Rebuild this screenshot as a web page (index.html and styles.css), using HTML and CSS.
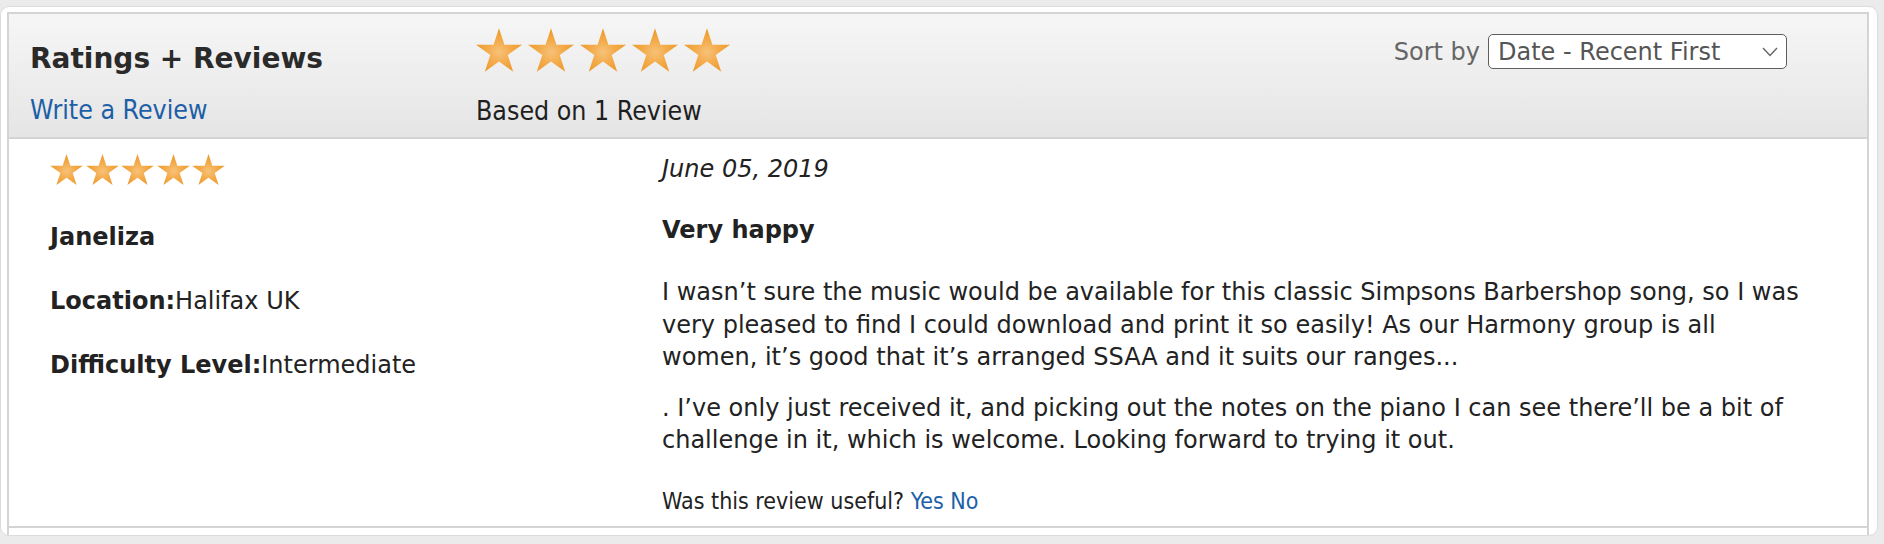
FILE: index.html
```html
<!DOCTYPE html>
<html lang="en">

<head>
  <meta charset="UTF-8">
  <meta name="viewport" content="width=device-width, initial-scale=1.0">
  <title>Ratings + Reviews</title>
  <link rel="stylesheet" href="styles.css">
</head>

<body>
  <svg class="svg-defs" width="0" height="0" aria-hidden="true">
    <defs>
      <radialGradient id="star-fill" cx="50%" cy="55%" r="55%">
        <stop offset="0%" stop-color="#f7c27a" />
        <stop offset="50%" stop-color="#f3aa48" />
        <stop offset="100%" stop-color="#ec982a" />
      </radialGradient>
      <symbol id="star" viewBox="0 0 100 95">
        <polygon points="50,0 61.8,36 100,36 69,58.5 80.9,95 50,72.5 19.1,95 31,58.5 0,36 38.2,36" fill="url(#star-fill)" />
      </symbol>
    </defs>
  </svg>

  <div class="panel">
    <div class="reviews">
      <div class="reviews-header">
        <div class="header-title">
          <h2>Ratings + Reviews</h2>
          <a href="#" class="link">Write a Review</a>
        </div>
        <div class="header-summary">
          <div class="stars stars-large">
            <svg><use href="#star" /></svg>
            <svg><use href="#star" /></svg>
            <svg><use href="#star" /></svg>
            <svg><use href="#star" /></svg>
            <svg><use href="#star" /></svg>
          </div>
          <div class="based-on">Based on 1 Review</div>
        </div>
        <div class="header-sort">
          <span class="sort-label">Sort by</span>
          <div class="sort-select">
            <span>Date - Recent First</span>
            <svg width="16" height="10" viewBox="0 0 16 10">
              <polyline points="1,1 8,8.5 15,1" fill="none" stroke="#666" stroke-width="1.4" />
            </svg>
          </div>
        </div>
      </div>

      <div class="review">
        <div class="review-author">
          <div class="stars stars-small">
            <svg><use href="#star" /></svg>
            <svg><use href="#star" /></svg>
            <svg><use href="#star" /></svg>
            <svg><use href="#star" /></svg>
            <svg><use href="#star" /></svg>
          </div>
          <div class="author-name">Janeliza</div>
          <div class="author-meta"><b>Location:</b>Halifax UK</div>
          <div class="author-meta"><b>Difficulty Level:</b>Intermediate</div>
        </div>
        <div class="review-body">
          <div class="review-date">June 05, 2019</div>
          <h3 class="review-title">Very happy</h3>
          <p>I wasn’t sure the music would be available for this classic Simpsons Barbershop song, so I was very pleased to find I could download and print it so easily! As our Harmony group is all<br>women, it’s good that it’s arranged SSAA and it suits our ranges...</p>
          <p>. I’ve only just received it, and picking out the notes on the piano I can see there’ll be a bit of challenge in it, which is welcome. Looking forward to trying it out.</p>
          <div class="review-useful">Was this review useful? <a href="#" class="link">Yes</a> <a href="#" class="link">No</a></div>
        </div>
      </div>
    </div>
  </div>
</body>

</html>
```

FILE: styles.css
```css
body {
  margin: 0;
  background-color: #ebebeb;
  color: #222;
  font-family: "DejaVu Sans", Verdana, sans-serif;
  font-size: 24px;
}

.svg-defs {
  position: absolute;
  width: 0;
  height: 0;
}

.link {
  color: #1d5fa6;
  text-decoration: none;
}

/* outer white card */
.panel {
  box-sizing: border-box;
  height: 530px;
  margin: 6px 6px 0 0;
  padding: 5px 8px 0 6px;
  background-color: #fff;
  border: 1px solid #dcdcdc;
  border-radius: 9px;
}

.reviews {
  box-sizing: border-box;
  height: 100%;
  border: 2px solid #d4d4d4;
  border-bottom: 0;
}

/* header bar */
.reviews-header {
  box-sizing: border-box;
  height: 125px;
  display: flex;
  background: linear-gradient(#f6f6f6, #e5e5e5);
  border-bottom: 2px solid #d4d4d4;
}

.header-title {
  width: 446px;
  padding: 27px 0 0 21px;
}

.header-title h2 {
  margin: 0;
  font-size: 28px;
  line-height: 36px;
  color: #2a2a2a;
}

.header-title .link,
.based-on {
  display: block;
  margin-top: 16px;
  font-family: "DejaVu Sans Condensed", "DejaVu Sans", sans-serif;
  font-stretch: condensed;
  font-size: 26.5px;
  line-height: 34px;
}

.header-summary {
  flex: 1;
  padding-top: 14px;
}

.based-on {
  margin-top: 22px;
  color: #1f1f1f;
}

.stars {
  display: flex;
}

.stars-large {
  gap: 6px;
}

.stars-large svg {
  width: 46px;
  height: 44px;
}

.stars-small {
  gap: 2.6px;
}

.stars-small svg {
  width: 33px;
  height: 31px;
}

.header-sort {
  display: flex;
  align-items: center;
  gap: 8px;
  align-self: flex-start;
  margin: 20px 80px 0 0;
  color: #666;
}

.sort-select {
  box-sizing: border-box;
  width: 299px;
  height: 35px;
  display: flex;
  align-items: center;
  justify-content: space-between;
  padding: 0 8px 0 9px;
  background-color: #fff;
  border: 1.5px solid #5e5e5e;
  border-radius: 5px;
  color: #555;
}

/* review row */
.review {
  display: flex;
  border-bottom: 2px solid #d4d4d4;
}

.review-author {
  width: 612px;
  padding: 15px 0 0 41px;
}

.author-name,
.author-meta {
  line-height: 32px;
  margin-top: 32px;
}

.author-name {
  margin-top: 36px;
  font-weight: bold;
}

.review-body {
  flex: 1;
  padding: 14px 28px 10px 0;
}

.review-date {
  font-style: italic;
  line-height: 32px;
}

.review-title {
  margin: 29px 0 0;
  font-size: 24px;
  line-height: 32px;
}

.review-body p {
  margin: 30px 0 0;
  line-height: 32.5px;
}

.review-body p + p {
  margin-top: 18px;
}

.review-useful {
  margin-top: 29px;
  font-family: "DejaVu Sans Condensed", "DejaVu Sans", sans-serif;
  font-stretch: condensed;
  font-size: 23px;
  line-height: 30px;
}
```
